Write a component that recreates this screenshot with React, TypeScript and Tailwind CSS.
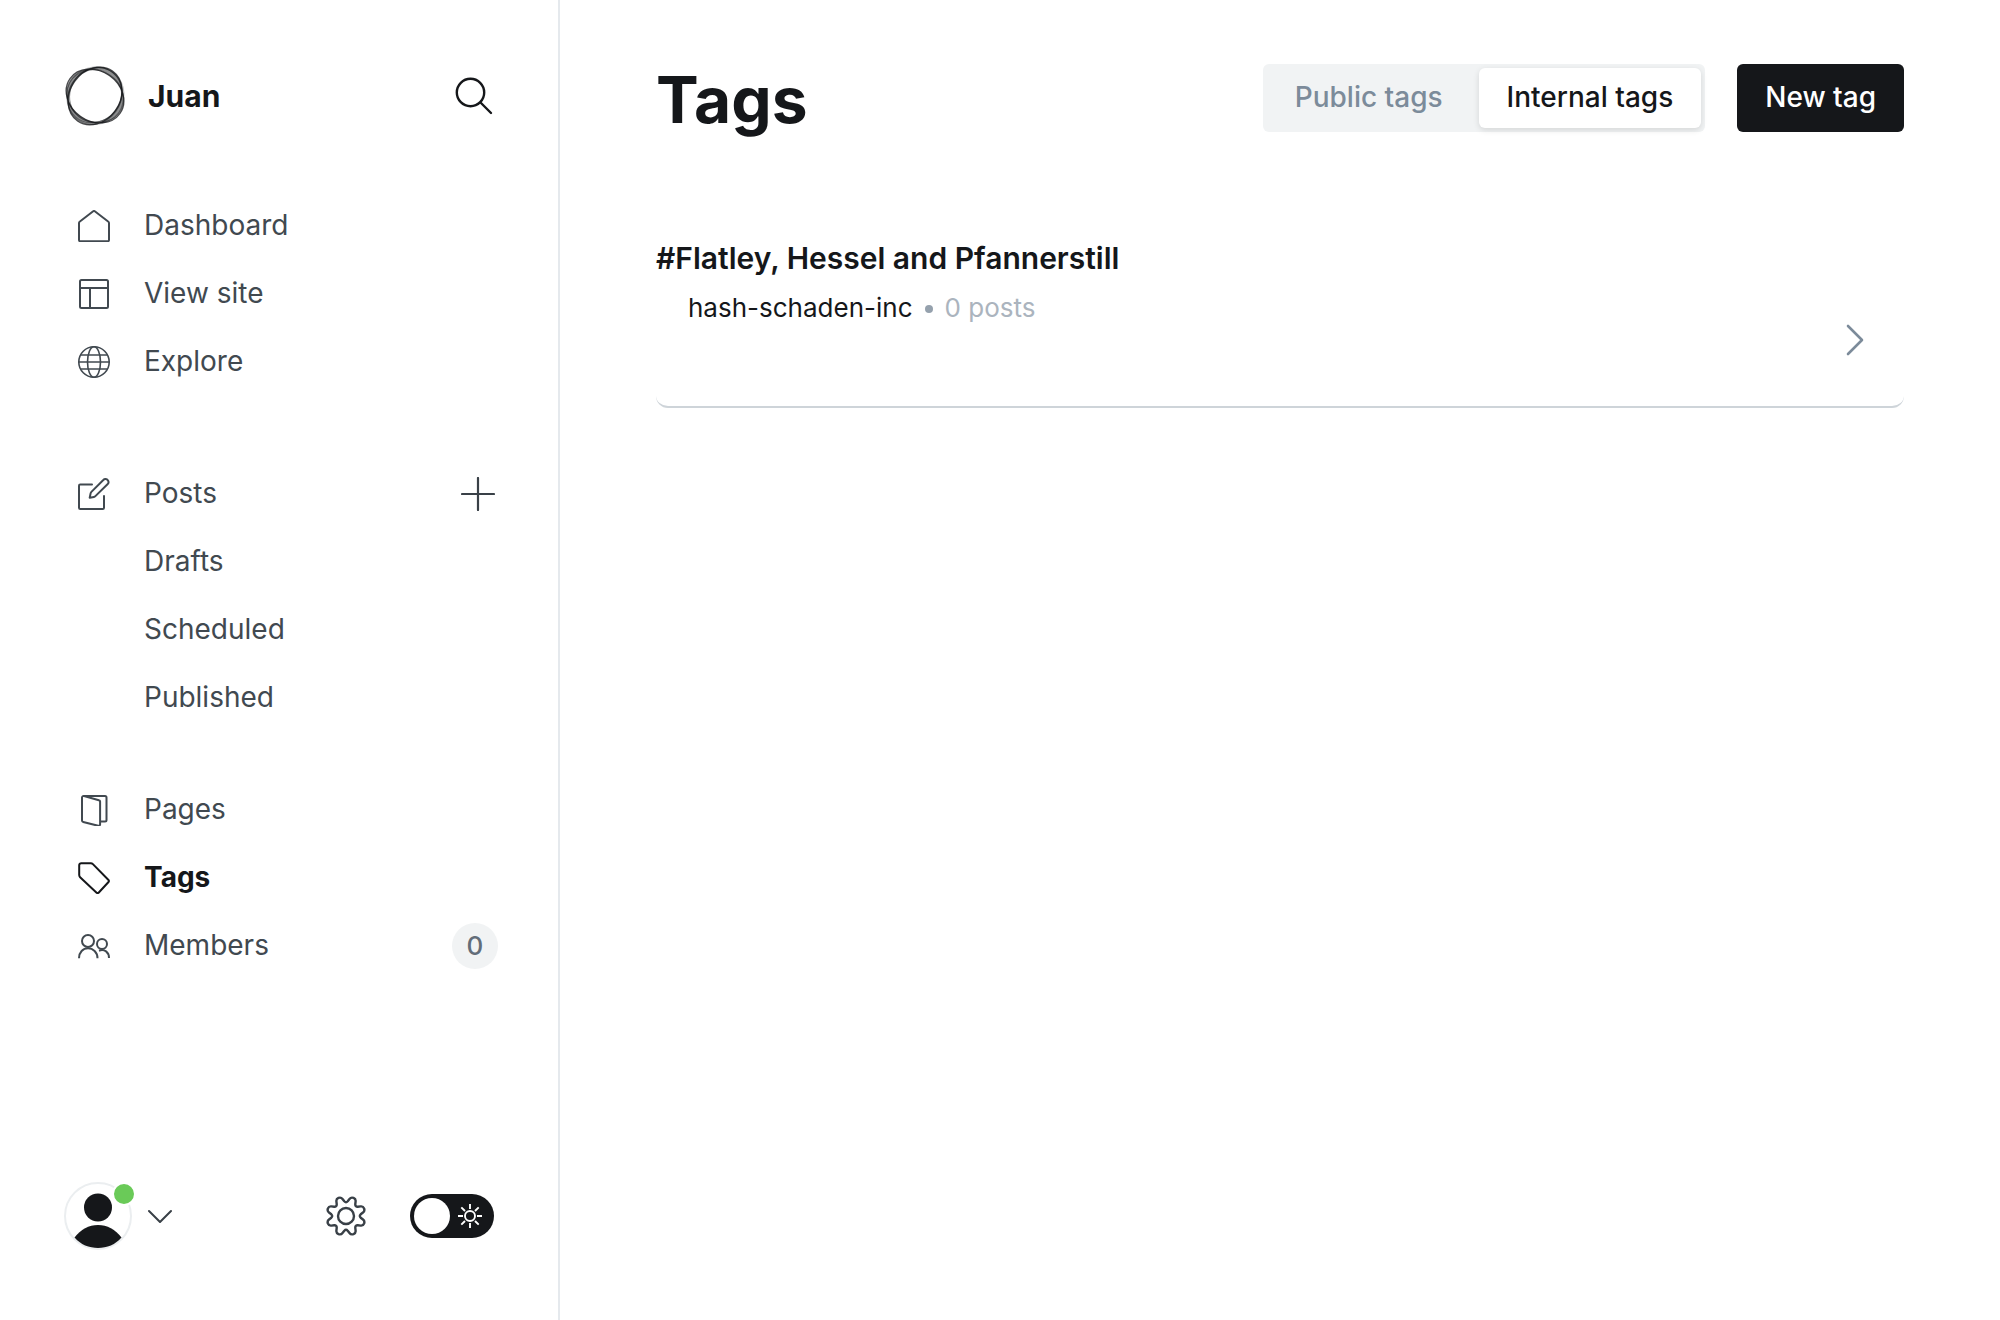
import type { ReactNode } from 'react';

function Icon({ children, className = 'size-8' }: { children: ReactNode; className?: string }) {
  return (
    <svg viewBox="0 0 32 32" fill="none" stroke="currentColor" strokeWidth="2" strokeLinecap="round" strokeLinejoin="round" className={className} aria-hidden="true">
      {children}
    </svg>
  );
}

const icons = {
  home: <path d="M1 13.2V30a1.2 1.2 0 0 0 1.2 1.2h27.6A1.2 1.2 0 0 0 31 30V13.2a2 2 0 0 0-.9-1.7L16.8 1.3a1.3 1.3 0 0 0-1.6 0L1.9 11.5a2 2 0 0 0-.9 1.7z" />,
  layout: <path d="M3.5 2h25A1.5 1.5 0 0 1 30 3.5v25a1.5 1.5 0 0 1-1.5 1.5h-25A1.5 1.5 0 0 1 2 28.5v-25A1.5 1.5 0 0 1 3.5 2zM2 10h28M12 10v20" />,
  globe: (
    <g strokeWidth="1.6">
      <circle cx="16" cy="16" r="15.2" />
      <ellipse cx="16" cy="16" rx="6.5" ry="15.2" />
      <path d="M1 16h30M2.8 9h26.4M2.8 23h26.4" />
    </g>
  ),
  edit: (
    <g strokeWidth="2">
      <path d="M14 6.6H2.2A1.2 1.2 0 0 0 1 7.8v22A1.2 1.2 0 0 0 2.2 31h22.6a1.2 1.2 0 0 0 1.2-1.2V18" />
      <path d="m11.7 19.8.9-4.4a3 3 0 0 1 .8-1.5L25.3 2a2.9 2.9 0 0 1 4.6.4 2.9 2.9 0 0 1-.4 3.8L17.4 18.1a3 3 0 0 1-1.5.8z" />
    </g>
  ),
  pages: <path d="M22.5 27.5H27a1.5 1.5 0 0 0 1.5-1.5V3.5A1.5 1.5 0 0 0 27 2H6M6 2a1.6 1.6 0 0 0-2 1.5v23a1.5 1.5 0 0 0 1.2 1.5l15 3.8a1.5 1.5 0 0 0 1.9-1.5V7.7a1.5 1.5 0 0 0-1.2-1.5z" />,
  tag: <path d="M1.2 3.2a2 2 0 0 1 2-2h9.6a3 3 0 0 1 2.1.9l15.6 15.9a1.4 1.4 0 0 1 0 2L20.6 30.7a1.4 1.4 0 0 1-2 0L2.1 15.2a3 3 0 0 1-.9-2.1z" />,
  members: (
    <g strokeLinecap="butt">
      <circle cx="10" cy="11" r="6" />
      <path d="M1 28.2c0-6 4-10 9-10s9.500 4 9.500 10" />
      <circle cx="24" cy="14" r="5" />
      <path d="M21 20.700c5.500-2 10 1.500 10 7.300" />
    </g>
  ),
};

function NavItem({ label, icon, active, extra }: { label: string; icon?: ReactNode; active?: boolean; extra?: ReactNode }) {
  return (
    <li className="flex h-17 items-center justify-between">
      <a href="#" aria-current={active ? 'page' : undefined} className={active ? 'flex flex-1 items-center gap-[34px] font-bold text-[#15171a]' : 'flex flex-1 items-center gap-[34px] text-[#414950]'}>
        <span className="flex size-8 items-center">{icon && <Icon>{icon}</Icon>}</span>
        <span className="pb-0.5">{label}</span>
      </a>
      {extra}
    </li>
  );
}

const strands = [
  { cx: 31, cy: 31, rx: 29.5, ry: 26, r: -55 },
  { cx: 31, cy: 31, rx: 29, ry: 26, r: 35 },
  { cx: 31.5, cy: 30.5, rx: 29, ry: 25.5, r: -48 },
  { cx: 31.5, cy: 31, rx: 29, ry: 25.5, r: 28 },
  { cx: 32.5, cy: 31, rx: 28, ry: 25.5, r: -62 },
];

function Logo() {
  return (
    <svg viewBox="0 0 62 62" className="size-[62px]" fill="none" stroke="#15171a" aria-hidden="true">
      <path
        fill="#15171a"
        fillOpacity="0.32"
        fillRule="evenodd"
        strokeWidth="1.3"
        strokeOpacity="0.75"
        d="M48.500 6A30.500 25-55 1 1 13.500 56A30.500 25-55 1 1 48.500 6zM56 48.500A30.500 25 35 1 1 6 13.500A30.500 25 35 1 1 56 48.500z"
      />
      <ellipse cx="31.5" cy="31" rx="28" ry="27" transform="rotate(-50 31 31)" strokeWidth="3.5" strokeOpacity="0.25" />
      {strands.map((e, i) => (
        <ellipse key={i} cx={e.cx} cy={e.cy} rx={e.rx} ry={e.ry} transform={`rotate(${e.r} 31 31)`} strokeWidth="1" strokeOpacity="0.4" />
      ))}
    </svg>
  );
}

function Sidebar() {
  return (
    <aside className="flex w-[560px] shrink-0 flex-col border-r-2 border-[#e5e9ed] pr-15 pl-16">
      <header className="mt-16 flex h-16 items-center justify-between">
        <a href="#" className="flex items-center gap-[22px] text-[30px] font-bold text-[#15171a]">
          <Logo />
          Juan
        </a>
        <button type="button" aria-label="Search" className="mr-1 text-[#15171a]">
          <svg viewBox="0 0 40 40" className="size-10" fill="none" stroke="currentColor" strokeWidth="2.4" strokeLinecap="round" aria-hidden="true">
            <circle cx="16.5" cy="16.5" r="13.7" />
            <path d="M26.5 26.5 37 37" />
          </svg>
        </button>
      </header>
      <nav className="mt-16 flex flex-col pl-3.5 text-[28px] leading-9">
        <ul className="mb-16">
          <NavItem label="Dashboard" icon={icons.home} />
          <NavItem label="View site" icon={icons.layout} />
          <NavItem label="Explore" icon={icons.globe} />
        </ul>
        <ul className="mb-11">
          <NavItem
            label="Posts"
            icon={icons.edit}
            extra={
              <button type="button" aria-label="New post" className="mr-[3px] text-[#394047]">
                <svg viewBox="0 0 34 34" className="size-[34px]" stroke="currentColor" strokeWidth="2.2" strokeLinecap="round" aria-hidden="true">
                  <path d="M1 17h32M17 1v32" />
                </svg>
              </button>
            }
          />
          <NavItem label="Drafts" />
          <NavItem label="Scheduled" />
          <NavItem label="Published" />
        </ul>
        <ul>
          <NavItem label="Pages" icon={icons.pages} />
          <NavItem label="Tags" icon={icons.tag} active />
          <NavItem
            label="Members"
            icon={icons.members}
            extra={<span className="flex size-[46px] items-center justify-center rounded-full bg-[#f1f3f4] text-[26px] font-medium text-[#626d79]">0</span>}
          />
        </ul>
      </nav>
      <footer className="mt-auto mb-[70px] flex items-center justify-between text-[#394047]">
        <button type="button" aria-label="Account menu" className="flex items-center gap-4">
          <span className="relative">
            <svg viewBox="0 0 68 68" className="size-[68px]" aria-hidden="true">
              <circle cx="34" cy="34" r="33" fill="#fff" stroke="#ebeef0" strokeWidth="2" />
              <circle cx="34" cy="25.5" r="14" fill="#15171a" />
              <path d="M10.500 55.500C16.500 47.500 25 43 34 43s17.500 4.500 23.500 12.500C51.500 62.500 43 66 34 66s-17.500-3.500-23.500-10.500z" fill="#15171a" />
            </svg>
            <span className="absolute top-0 -right-1 size-6 rounded-full border-2 border-white bg-[#6aca58]" />
          </span>
          <svg viewBox="0 0 24 14" className="h-3.5 w-6" fill="none" stroke="currentColor" strokeWidth="2" strokeLinecap="round" strokeLinejoin="round" aria-hidden="true">
            <path d="m1 2 11 11L23 2" />
          </svg>
        </button>
        <div className="mr-1 flex items-center gap-11">
          <button type="button" aria-label="Settings">
            <svg viewBox="0 0 40 40" className="size-10" fill="none" stroke="currentColor" strokeWidth="2.4" strokeLinejoin="round" aria-hidden="true">
              <circle cx="20" cy="20" r="8" />
              <path d="M18.300 5.300Q20 7.100 21.700 5.300L23.500 3Q25 1 27.500 1.900 29.900 2.900 29.600 5.300L29.300 8.200Q29.200 10.800 31.800 10.700L34.700 10.400Q37.100 10.100 38.100 12.500 39 15 37 16.500L34.700 18.300Q32.900 20 34.700 21.700L37 23.500Q39 25 38.100 27.500 37.100 29.900 34.700 29.600L31.800 29.300Q29.200 29.200 29.300 31.800L29.600 34.700Q29.900 37.100 27.500 38.100 25 39 23.500 37L21.700 34.700Q20 32.900 18.300 34.700L16.500 37Q15 39 12.500 38.100 10.100 37.100 10.400 34.700L10.700 31.800Q10.800 29.200 8.200 29.300L5.300 29.600Q2.900 29.900 1.900 27.500 1 25 3 23.500L5.300 21.700Q7.100 20 5.300 18.300L3 16.500Q1 15 1.900 12.500 2.900 10.100 5.300 10.400L8.200 10.700Q10.800 10.800 10.700 8.200L10.400 5.300Q10.100 2.900 12.500 1.900 15 1 16.500 3z" />
            </svg>
          </button>
          <label className="relative flex h-11 w-21 items-center rounded-full bg-[#15171a] px-1">
            <input type="checkbox" role="switch" aria-label="Dark mode" className="absolute inset-0 appearance-none rounded-full" />
            <span className="size-9 rounded-full bg-white" />
            <svg viewBox="0 0 24 24" className="ml-2 size-6" fill="none" stroke="#fff" strokeWidth="1.9" aria-hidden="true">
              <circle cx="12" cy="12" r="5" />
              <path d="M12 0v5M12 19v5M0 12h5M19 12h5M3.300 3.300l3.700 3.700M17 17l3.700 3.700M3.300 20.700 7 17M17 7l3.700-3.700" />
            </svg>
          </label>
        </div>
      </footer>
    </aside>
  );
}

export default function App() {
  return (
    <div className="flex min-h-screen bg-white font-['Inter',sans-serif] text-[#15171a]">
      <Sidebar />
      <main className="min-w-0 flex-1 px-24 pt-16">
        <header className="flex items-center justify-between">
          <h1 className="pt-1 text-[64px] leading-16 font-bold">Tags</h1>
          <div className="flex items-center gap-8 text-[28px] leading-9 font-medium">
            <div className="flex h-17 rounded-md bg-[#f1f3f4] p-1">
              <button type="button" className="pr-9 pb-0.5 pl-7 text-[#7c8b9a]">Public tags</button>
              <button type="button" aria-pressed="true" className="rounded-md bg-white px-7 pb-0.5 shadow-[0_2px_6px_rgba(0,0,0,0.12)]">Internal tags</button>
            </div>
            <button type="button" className="h-17 rounded-md bg-[#15171a] px-7 pb-0.5 text-white">New tag</button>
          </div>
        </header>
        <ul className="mt-[100px]">
          <li>
            <a href="#" className="flex h-44 items-start justify-between rounded-b-xl border-b-2 border-[#ced4d9]">
              <div className="pt-1.5">
                <h3 className="text-[30px] leading-10 font-semibold">#Flatley, Hessel and Pfannerstill</h3>
                <p className="mt-3.5 flex items-center gap-3 pl-8 text-[26px] leading-8">
                  <span>hash-schaden-inc</span>
                  <span className="mt-0.5 size-2 rounded-full bg-[#95a1ad]" />
                  <span className="text-[#abb4be]">0 posts</span>
                </p>
              </div>
              <svg viewBox="0 0 18 32" className="mt-[92px] mr-10 h-8 w-[18px]" fill="none" stroke="#7c8b9a" strokeWidth="2.6" strokeLinecap="round" strokeLinejoin="round" aria-hidden="true">
                <path d="m2 2 14 14L2 30" />
              </svg>
            </a>
          </li>
        </ul>
      </main>
    </div>
  );
}
